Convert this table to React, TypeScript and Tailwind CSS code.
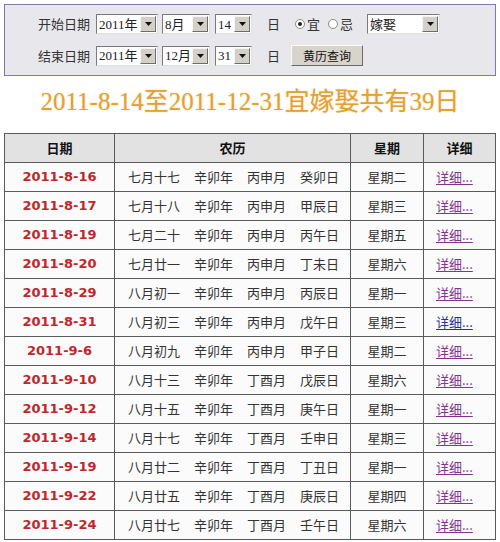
const rows = [
  { date: '2011-8-16', lunar: ['七月十七', '辛卯年', '丙申月', '癸卯日'], week: '星期二' },
  { date: '2011-8-17', lunar: ['七月十八', '辛卯年', '丙申月', '甲辰日'], week: '星期三' },
  { date: '2011-8-19', lunar: ['七月二十', '辛卯年', '丙申月', '丙午日'], week: '星期五' },
  { date: '2011-8-20', lunar: ['七月廿一', '辛卯年', '丙申月', '丁未日'], week: '星期六' },
  { date: '2011-8-29', lunar: ['八月初一', '辛卯年', '丙申月', '丙辰日'], week: '星期一' },
  { date: '2011-8-31', lunar: ['八月初三', '辛卯年', '丙申月', '戊午日'], week: '星期三', fresh: true },
  { date: '2011-9-6', lunar: ['八月初九', '辛卯年', '丙申月', '甲子日'], week: '星期二' },
  { date: '2011-9-10', lunar: ['八月十三', '辛卯年', '丁酉月', '戊辰日'], week: '星期六' },
  { date: '2011-9-12', lunar: ['八月十五', '辛卯年', '丁酉月', '庚午日'], week: '星期一' },
  { date: '2011-9-14', lunar: ['八月十七', '辛卯年', '丁酉月', '壬申日'], week: '星期三' },
  { date: '2011-9-19', lunar: ['八月廿二', '辛卯年', '丁酉月', '丁丑日'], week: '星期一' },
  { date: '2011-9-22', lunar: ['八月廿五', '辛卯年', '丁酉月', '庚辰日'], week: '星期四' },
  { date: '2011-9-24', lunar: ['八月廿七', '辛卯年', '丁酉月', '壬午日'], week: '星期六' },
];

function FakeSelect({ value, className }: { value: string; className: string }) {
  return (
    <div
      className={`flex h-[20px] items-center border border-t-[#7a7a7a] border-l-[#7a7a7a] border-b-[#e0e0e0] border-r-[#e0e0e0] bg-white ${className}`}
    >
      <span className="flex-1 pl-[2px] font-['Liberation_Serif','DejaVu_Serif','Noto_Sans_CJK_SC',serif] text-[13px] leading-none text-[#222]">
        {value}
      </span>
      <span className="mr-[1px] flex h-[16px] w-[16px] items-center justify-center border border-t-[#f4f4f4] border-l-[#f4f4f4] border-b-[#6c6c6c] border-r-[#6c6c6c] bg-[#d4d0c8]">
        <svg width="7" height="4" viewBox="0 0 7 4">
          <path d="M0 0h7L3.5 4z" fill="#111" />
        </svg>
      </span>
    </div>
  );
}

function Radio({ checked }: { checked?: boolean }) {
  return (
    <span className="flex h-[10px] w-[10px] items-center justify-center rounded-full border border-[#8a8a8a] bg-white">
      {checked && <span className="h-[4px] w-[4px] rounded-full bg-[#222]" />}
    </span>
  );
}

export default function App() {
  return (
    <div className="w-[500px] bg-white p-[4px] font-['Noto_Sans_CJK_SC',sans-serif]">
      {/* Query panel */}
      <div className="flex h-[72px] flex-col justify-center gap-[11px] border border-[#7c7ca4] bg-[#e8e8ec] pl-[33px] text-[13px] text-[#333]">
        <div className="flex items-center">
          <span className="w-[52px]">开始日期</span>
          <FakeSelect value="2011年" className="ml-[6px] w-[62px]" />
          <FakeSelect value="8月" className="ml-[4px] w-[48px]" />
          <FakeSelect value="14" className="ml-[5px] w-[37px]" />
          <span className="ml-[15px]">日</span>
          <span className="ml-[15px] flex items-center gap-[2px]">
            <Radio checked />
            <span>宜</span>
          </span>
          <span className="ml-[8px] flex items-center gap-[2px]">
            <Radio />
            <span>忌</span>
          </span>
          <FakeSelect value="嫁娶" className="ml-[14px] w-[73px]" />
        </div>
        <div className="flex items-center">
          <span className="w-[52px]">结束日期</span>
          <FakeSelect value="2011年" className="ml-[6px] w-[62px]" />
          <FakeSelect value="12月" className="ml-[4px] w-[48px]" />
          <FakeSelect value="31" className="ml-[5px] w-[37px]" />
          <span className="ml-[15px]">日</span>
          <button className="ml-[11px] h-[21px] w-[72px] border border-t-[#fafafa] border-l-[#fafafa] border-b-[#6a6a6a] border-r-[#6a6a6a] bg-[#d8d4cc] text-[12px] leading-none text-[#111]">
            黄历查询
          </button>
        </div>
      </div>

      {/* Title */}
      <h1 className="mt-[11px] text-center font-['Liberation_Serif','DejaVu_Serif','Noto_Sans_CJK_SC',serif] text-[25px] leading-[30px] font-normal text-[#e3a033] [text-shadow:0_0_2px_#f3d9a8]">
        2011-8-14至2011-12-31宜嫁娶共有39日
      </h1>

      {/* Result table */}
      <table className="mt-[16px] w-[492px] border-collapse text-[13px]">
        <thead>
          <tr className="h-[29px] bg-[#e2e2e2] text-[#111]">
            <th className="w-[110px] border border-[#5a5a5a] font-bold">日期</th>
            <th className="w-[236px] border border-[#5a5a5a] font-bold">农历</th>
            <th className="w-[73px] border border-[#5a5a5a] font-bold">星期</th>
            <th className="border border-[#5a5a5a] font-bold">详细</th>
          </tr>
        </thead>
        <tbody>
          {rows.map((r) => (
            <tr key={r.date} className="h-[29px] bg-[#fbfbfb]">
              <td className="border border-[#5a5a5a] text-center font-['DejaVu_Sans',sans-serif] font-bold text-[#c0262c]">
                {r.date}
              </td>
              <td className="border border-[#5a5a5a] pl-[13px] text-[#333]">
                <div className="flex gap-[14px]">
                  {r.lunar.map((s) => (
                    <span key={s}>{s}</span>
                  ))}
                </div>
              </td>
              <td className="border border-[#5a5a5a] text-center text-[#333]">{r.week}</td>
              <td className="border border-[#5a5a5a] pl-[12px]">
                <a
                  href="#"
                  className={`underline underline-offset-2 ${r.fresh ? 'text-[#2c2ca8]' : 'text-[#86338f]'}`}
                >
                  详细...
                </a>
              </td>
            </tr>
          ))}
        </tbody>
      </table>
    </div>
  );
}
